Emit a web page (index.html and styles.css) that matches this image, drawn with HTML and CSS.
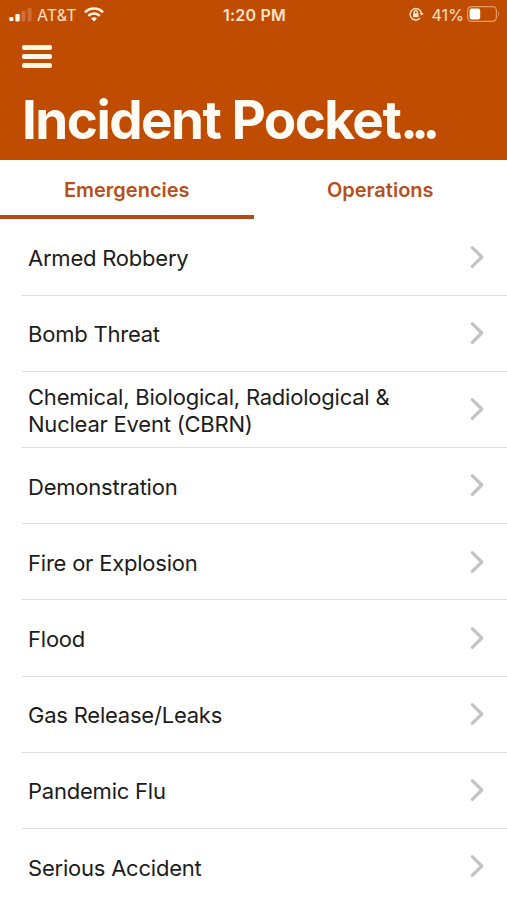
FILE: index.html
```html
<!DOCTYPE html>
<html lang="en">
<head>
  <meta charset="UTF-8">
  <meta name="viewport" content="width=device-width, initial-scale=1">
  <title>Incident Pocket Guide</title>
  <link rel="stylesheet" href="styles.css">
</head>
<body>

  <svg width="0" height="0" class="sprite">
    <symbol id="chevron" viewBox="0 0 16 24">
      <path d="M3.3 2.7 L12.8 12 L3.3 21.3" fill="none" stroke="#c3c3c5" stroke-width="3.2" stroke-linecap="round" stroke-linejoin="round"/>
    </symbol>
  </svg>

  <header class="header">
    <div class="status">
      <div class="status-left">
        <svg class="signal" width="24" height="14" viewBox="0 0 24 14">
          <rect x="0.4" y="9" width="4" height="4" rx="0.8"/>
          <rect x="6.4" y="6" width="4.3" height="7.4" rx="0.8"/>
          <rect class="off" x="12.4" y="3" width="4" height="10.4" rx="0.8"/>
          <rect class="off" x="18.6" y="0" width="4" height="13.4" rx="0.8"/>
        </svg>
        <span class="carrier">AT&amp;T</span>
        <svg class="wifi" width="20" height="15" viewBox="0 0 20 15">
          <path d="M1 5.3 A12.6 12.6 0 0 1 19 5.3"/>
          <path d="M4.3 8.9 A8 8 0 0 1 15.7 8.9"/>
          <path class="dot" d="M10 14.6 L7 11.6 A4.3 4.3 0 0 1 13 11.6 Z"/>
        </svg>
      </div>
      <span class="time">1:20 PM</span>
      <div class="status-right">
        <svg class="lock" width="15" height="14" viewBox="0 0 15 14">
          <path d="M11 11.2 A5.7 5.7 0 1 1 12.4 6"/>
          <path class="solid" d="M10.6 6 H14.6 L12.7 8.8 Z"/>
          <rect class="solid" x="4" y="6.2" width="5.6" height="4" rx="0.6"/>
          <path d="M5.2 6.5 V5.2 A1.6 1.6 0 0 1 8.4 5.2 V6.5"/>
        </svg>
        <span class="percent">41%</span>
        <svg class="battery" width="33" height="16" viewBox="0 0 33 16">
          <rect class="case" x="0.6" y="0.6" width="28.8" height="14.8" rx="4"/>
          <rect class="level" x="2.6" y="2.6" width="10.6" height="10.8" rx="1.8"/>
          <path class="cap" d="M31 5.5 Q33 8 31 10.5 Z"/>
        </svg>
      </div>
    </div>

    <button class="menu" aria-label="Menu">
      <span></span>
      <span></span>
      <span></span>
    </button>

    <h1>Incident Pocket<span class="dots">...</span></h1>
  </header>

  <nav class="tabs">
    <a class="tab active">Emergencies</a>
    <a class="tab">Operations</a>
  </nav>

  <ul class="list">
    <li><span>Armed Robbery</span><svg class="chevron"><use href="#chevron"/></svg></li>
    <li><span>Bomb Threat</span><svg class="chevron"><use href="#chevron"/></svg></li>
    <li><span>Chemical, Biological, Radiological &amp; Nuclear Event (CBRN)</span><svg class="chevron"><use href="#chevron"/></svg></li>
    <li><span>Demonstration</span><svg class="chevron"><use href="#chevron"/></svg></li>
    <li><span>Fire or Explosion</span><svg class="chevron"><use href="#chevron"/></svg></li>
    <li><span>Flood</span><svg class="chevron"><use href="#chevron"/></svg></li>
    <li><span>Gas Release/Leaks</span><svg class="chevron"><use href="#chevron"/></svg></li>
    <li><span>Pandemic Flu</span><svg class="chevron"><use href="#chevron"/></svg></li>
    <li><span>Serious Accident</span><svg class="chevron"><use href="#chevron"/></svg></li>
  </ul>

</body>
</html>
```
FILE: styles.css
```css
* {
  box-sizing: border-box;
}

body {
  margin: 0;
  height: 900px;
  overflow: hidden;
  background: #fff;
  color: #1c1c1c;
  font-family: Inter, "Liberation Sans", sans-serif;
}

.sprite {
  display: block;
}

.header {
  height: 160px;
  background: #bf4c00;
  color: #fffaf2;
}

/* status bar */
.status {
  display: grid;
  grid-template-columns: 1fr auto 1fr;
  align-items: center;
  height: 29px;
  padding: 0 7px 0 9px;
  font-size: 16px;
  line-height: 20px;
  color: #ffe3c8;
}

.status-left,
.status-right {
  display: flex;
  align-items: center;
}

.status-right {
  justify-content: flex-end;
}

.signal {
  fill: #fff6ea;
}

.signal .off {
  fill: #d06f35;
}

.carrier {
  margin-left: 4px;
  letter-spacing: 0.1px;
}

.wifi {
  margin-left: 7px;
  fill: none;
  stroke: #fff0df;
  stroke-width: 2.6;
}

.wifi .dot {
  fill: #fff0df;
  stroke: none;
}

.time {
  font-weight: 600;
  letter-spacing: 0.2px;
}

.lock {
  margin-top: -1px;
  fill: none;
  stroke: #ffe3c8;
  stroke-width: 1.4;
}

.lock .solid {
  fill: #ffe3c8;
  stroke: none;
}

.percent {
  margin-left: 7px;
  letter-spacing: 0.1px;
}

.battery {
  margin-top: -1px;
  margin-left: 3px;
}

.battery .case {
  fill: none;
  stroke: #e39a68;
  stroke-width: 1.2;
}

.battery .level {
  fill: #fff;
}

.battery .cap {
  fill: #e39a68;
}

.menu {
  display: flex;
  flex-direction: column;
  gap: 4px;
  margin: 16px 0 0 22px;
  padding: 0;
  border: none;
  background: none;
}

.menu span {
  width: 30px;
  height: 5px;
  border-radius: 2px;
  background: #fff6e6;
}

h1 {
  margin: 20px 0 0 22px;
  font-size: 53px;
  line-height: 64px;
  font-weight: 700;
  letter-spacing: -1.55px;
  white-space: nowrap;
}

h1 .dots {
  letter-spacing: -6.6px;
}

/* tabs */
.tabs {
  display: flex;
  height: 59px;
}

.tab {
  flex: 1;
  padding-top: 17px;
  border-bottom: 4px solid transparent;
  color: #b5501b;
  font-size: 20px;
  line-height: 26px;
  font-weight: 600;
  text-align: center;
}

.tab.active {
  border-bottom-color: #b04a18;
}

/* list */
.list {
  margin: 0;
  padding: 0.5px 0 0 22px;
  list-style: none;
}

.list li {
  display: flex;
  align-items: center;
  justify-content: space-between;
  height: 76.2px;
  padding: 3px 22px 0 6px;
  border-bottom: 1px solid #dedede;
  font-size: 22px;
  line-height: 27px;
  letter-spacing: -0.22px;
}

.list span {
  max-width: 380px;
}

.chevron {
  width: 16px;
  height: 24px;
  margin-top: -3.5px;
}
```
